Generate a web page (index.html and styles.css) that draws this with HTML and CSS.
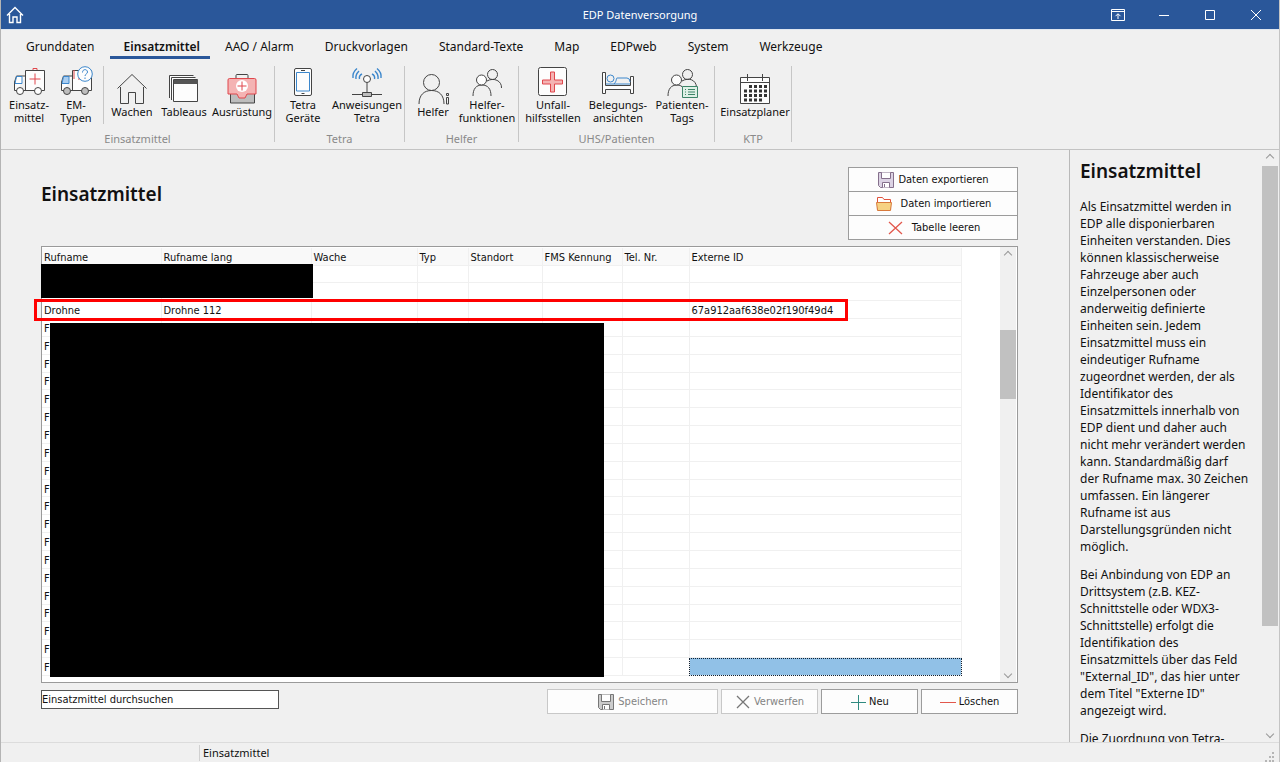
FILE: index.html
```html
<!DOCTYPE html>
<html lang="de">
<head>
<meta charset="utf-8">
<title>EDP Datenversorgung</title>
<link rel="stylesheet" href="styles.css">
</head>
<body>
<div class="app">
  <header class="titlebar">
    <button class="tb-btn tb-home" aria-label="Start"><svg width="18" height="18" viewBox="0 0 18 18"><path d="M1 9.500 9 1.500l8 8M3.500 8v8.500h3.500v-5.500h4v5.500h3.500V8"/></svg></button>
    <span class="tb-title">EDP Datenversorgung</span>
    <div class="tb-controls">
      <button class="tb-btn" aria-label="Menüband"><svg width="14" height="12" viewBox="0 0 14 12"><path d="M.5.5h13v11H.5zM.5 2.500h13M7 10V5M4.500 7.200 7 4.700l2.500 2.500"/></svg></button>
      <button class="tb-btn" aria-label="Minimieren"><svg width="12" height="12" viewBox="0 0 12 12"><path d="M1 6.500h10"/></svg></button>
      <button class="tb-btn" aria-label="Maximieren"><svg width="12" height="12" viewBox="0 0 12 12"><path d="M1.500 1.500h9v9h-9z"/></svg></button>
      <button class="tb-btn" aria-label="Schließen"><svg width="12" height="12" viewBox="0 0 12 12"><path d="m1 1 10 10M11 1 1 11"/></svg></button>
    </div>
  </header>

  <nav class="tabs">
    <button class="tab">Grunddaten</button>
    <button class="tab tab-active">Einsatzmittel</button>
    <button class="tab">AAO / Alarm</button>
    <button class="tab">Druckvorlagen</button>
    <button class="tab">Standard-Texte</button>
    <button class="tab">Map</button>
    <button class="tab">EDPweb</button>
    <button class="tab">System</button>
    <button class="tab">Werkzeuge</button>
  </nav>

  <div class="ribbon">
    <section class="group">
      <div class="items items-einsatz">
        <button class="item"><svg width="34" height="32" viewBox="0 0 34 32"><path class="k w" d="M13.500 24.500V4.500h19v20h-3M23 24.500H11M5 24.500H2.500V16l2-6h9"/><path class="b" d="M4.500 10.500H10v7H3z"/><path class="r" d="M21 4V2.500h4V4M23 7.500v11M17.500 13h11"/><circle class="k w" cx="8" cy="25" r="3.500"/><circle class="k w" cx="26" cy="25" r="3.500"/></svg><span>Einsatz-<br>mittel</span></button>
        <button class="item"><svg width="34" height="32" viewBox="0 0 34 32"><path class="k w" d="M13.500 24.500V4.500h19v20h-3M23 24.500H11M5 24.500H2.500V16l2-6h9"/><path class="b bf" d="M4.500 10.500H10v7H3z"/><path class="r" d="M15 4v9M19 13h2"/><circle class="k g" cx="8" cy="25" r="3.500"/><circle class="k g" cx="26" cy="25" r="3.500"/><circle class="b w" cx="26" cy="8" r="7.300"/><path class="b" d="M23.500 6.500c0-4 5-3.500 5-.500 0 2-2.500 2-2.500 4M26 11.500v1.500"/></svg><span>EM-<br>Typen</span></button>
        <i class="sep"></i>
        <button class="item"><svg width="32" height="32" viewBox="0 0 32 32"><path class="k" d="M1.500 15.500 16 1.500l14.500 14M4.500 14v16.500h8v-11h7v11h8V14"/></svg><span>Wachen</span></button>
        <button class="item"><svg width="32" height="32" viewBox="0 0 32 32"><path class="k w" d="M1.500 25V2.500h24M3.500 27V4.500h24M5.500 28V6.500h24v22h-24z"/><path class="df" d="M6 7h24v4H6z"/></svg><span>Tableaus</span></button>
        <button class="item"><svg width="32" height="32" viewBox="0 0 32 32"><path class="k g" d="M4.500 19v11h24V19z"/><path class="k" d="M10 5V2.500q0-1 1-1h10q1 0 1 1V5"/><path class="r rf" d="M3.500 5.500h25q1.500 0 1.500 1.500v14h-9l-2 4h-6l-2-4H2V7q0-1.500 1.500-1.500z"/><circle cx="16" cy="13" r="6" fill="#fff"/><path class="r" d="M16 8.500v9M11.500 13h9"/></svg><span>Ausrüstung</span></button>
      </div>
      <div class="group-label">Einsatzmittel</div>
    </section>
    <section class="group">
      <div class="items items-tetra">
        <button class="item"><svg width="32" height="32" viewBox="0 0 32 32"><rect class="k w" x="7.500" y="2.500" width="17" height="27" rx="1.500"/><path class="b" d="M9.500 6.500h13v18.500h-13z"/><path class="k" d="M14 4.500h4M14.500 27.500h3"/></svg><span>Tetra<br>Geräte</span></button>
        <button class="item"><svg width="32" height="32" viewBox="0 0 32 32"><circle class="k w" cx="16" cy="13" r="3.500"/><path class="k" d="M16 16.500V27M1 28.500h30"/><path class="k g" d="M11.500 26.500h9v4h-9z"/><path class="b b2" d="M11 8c-2 1-3 3-2.500 5M8 5C6 7 4.500 10 5 13M6 2.500C3 5 1.500 9 2 12M21 8c2 1 3 3 2.500 5M24 5C26 7 27.500 10 27 13M26 2.500c3 2.500 4.500 6.500 4 9.500"/></svg><span>Anweisungen<br>Tetra</span></button>
      </div>
      <div class="group-label">Tetra</div>
    </section>
    <section class="group">
      <div class="items items-helfer">
        <button class="item"><svg width="32" height="32" viewBox="0 0 32 32"><circle class="k" cx="14.500" cy="9.500" r="8"/><path class="k" d="M2 31c0-9 5-13.500 12.500-13.500S27 22 27 31M29.500 20.500h2v2h-2zM29.500 24.500h2v6.500h-2z"/></svg><span>Helfer</span></button>
        <button class="item"><svg width="32" height="32" viewBox="0 0 32 32"><circle class="k" cx="21.500" cy="8.500" r="5"/><path class="k" d="M16 15c7-4 15 0 14.500 7M2 30c0-7 3-11 9-11s9 4 9 11"/><circle class="k w" cx="10.500" cy="14" r="5"/></svg><span>Helfer-<br>funktionen</span></button>
      </div>
      <div class="group-label">Helfer</div>
    </section>
    <section class="group">
      <div class="items items-uhs">
        <button class="item"><svg width="32" height="32" viewBox="0 0 32 32"><rect class="k w" x="1.500" y="1.500" width="28" height="28" rx="2"/><path class="r rf" d="M13.500 6h4v8h8v4h-8v8h-4v-8h-8v-4h8z"/></svg><span>Unfall-<br>hilfsstellen</span></button>
        <button class="item"><svg width="32" height="32" viewBox="0 0 32 32"><path class="k w" d="M.5 6.500h3v13h25v-9h3v17h-3v-4h-25v4h-3z"/><circle class="b" cx="8.500" cy="12.500" r="3.500"/><path class="b" d="M12 18c3-3 2-6 3-6h10q3 0 3 4M4 18h24"/></svg><span>Belegungs-<br>ansichten</span></button>
        <button class="item"><svg width="32" height="32" viewBox="0 0 32 32"><circle class="k" cx="21.500" cy="8.500" r="5"/><path class="k" d="M16 15c7-4 14-1 14.500 6M2 30c0-7 3-11 9-11 3 0 5 1 6 3"/><circle class="k w" cx="10.500" cy="14" r="5"/><path class="gn" d="M16.500 20.500h15v11h-15zM19 23.500h1M22 23.500h7M19 26h1M22 26h7M19 28.500h1M22 28.500h7"/></svg><span>Patienten-<br>Tags</span></button>
      </div>
      <div class="group-label">UHS/Patienten</div>
    </section>
    <section class="group">
      <div class="items items-ktp">
        <button class="item"><svg width="32" height="32" viewBox="0 0 32 32"><path class="k w" d="M1.500 4.500h29v26h-29zM1.500 9.500h29"/><path class="k" d="M8.500 1v7M23.500 1v7"/><path d="M10 13.500h18M5 18h23M5 22.500h23M5 27h18" fill="none" stroke="#333" stroke-width="3" stroke-dasharray="3 2"/></svg><span>Einsatzplaner</span></button>
      </div>
      <div class="group-label">KTP</div>
    </section>
  </div>

  <div class="body">
    <main class="main">
      <div class="main-head">
        <h1 class="title">Einsatzmittel</h1>
        <div class="actions">
          <button class="btn"><svg width="18" height="18" viewBox="0 0 18 18"><path d="M1.500 1.500h15v15h-13l-2-2z" fill="#dcd3e4" stroke="#85708c"/><path d="M4.500 1.500v6h9v-6M5.500 16.500v-5h7v5M7.500 13v3" fill="#fff" stroke="#85708c"/></svg>Daten exportieren</button>
          <button class="btn btn-wide"><svg width="18" height="18" viewBox="0 0 18 18"><path d="M2.500 15V2.500h5l1.500 2h6.500V15" fill="#fff" stroke="#e0533d"/><path d="M1.500 7.500h15l-1 8h-13z" fill="#f6d283" stroke="#d87a3c"/></svg>Daten importieren</button>
          <button class="btn btn-wide"><svg width="18" height="18" viewBox="0 0 18 18"><path d="m3 3 13 12M16 3 3 15" fill="none" stroke="#e2574c" stroke-width="1.300"/></svg>Tabelle leeren</button>
        </div>
      </div>

      <div class="grid-box">
        <div class="grid-scroll">
          <table class="grid">
            <colgroup><col class="c1"><col class="c2"><col class="c3"><col class="c4"><col class="c5"><col class="c6"><col class="c7"><col class="c8"></colgroup>
            <thead><tr><th>Rufname</th><th>Rufname lang</th><th>Wache</th><th>Typ</th><th>Standort</th><th>FMS Kennung</th><th>Tel. Nr.</th><th>Externe ID</th></tr></thead>
            <tbody id="rows"></tbody>
          </table>
        </div>
        <div class="vscroll"><span class="arrow arrow-up"></span><span class="track"><span class="thumb thumb-grid"></span></span><span class="arrow arrow-down"></span></div>
        <div class="mask mask-top"></div>
        <div class="mask mask-rows"></div>
        <div class="marker"></div>
      </div>

      <div class="footer">
        <input class="search" type="text" aria-label="Einsatzmittel durchsuchen" placeholder="Einsatzmittel durchsuchen">
        <div class="footer-buttons">
          <button class="btn btn-save" disabled><svg width="18" height="18" viewBox="0 0 18 18"><path d="M1.500 1.500h15v15h-13l-2-2z" fill="#ccc" stroke="#777"/><path d="M4.500 1.500v7h9v-7M5.500 16.500v-5h7v5M7.500 13v3" fill="#fff" stroke="#777"/></svg>Speichern</button>
          <button class="btn btn-std" disabled><svg width="16" height="18" viewBox="0 0 16 18"><path d="m2 3 12 12M14 3 2 15" fill="none" stroke="#777" stroke-width="1.300"/></svg>Verwerfen</button>
          <button class="btn btn-std"><svg width="16" height="18" viewBox="0 0 16 18"><path d="M1 9.500h15M8.500 2v15" fill="none" stroke="#2f8a80"/></svg>Neu</button>
          <button class="btn btn-std"><svg width="16" height="18" viewBox="0 0 16 18"><path d="M0 9.500h16" fill="none" stroke="#e2574c"/></svg>Löschen</button>
        </div>
      </div>
    </main>

    <aside class="help">
      <div class="help-text">
        <h2 class="title">Einsatzmittel</h2>
        <p>Als Einsatzmittel werden in<br>EDP alle disponierbaren<br>Einheiten verstanden. Dies<br>können klassischerweise<br>Fahrzeuge aber auch<br>Einzelpersonen oder<br>anderweitig definierte<br>Einheiten sein. Jedem<br>Einsatzmittel muss ein<br>eindeutiger Rufname<br>zugeordnet werden, der als<br>Identifikator des<br>Einsatzmittels innerhalb von<br>EDP dient und daher auch<br>nicht mehr verändert werden<br>kann. Standardmäßig darf<br>der Rufname max. 30 Zeichen<br>umfassen. Ein längerer<br>Rufname ist aus<br>Darstellungsgründen nicht<br>möglich.</p>
        <p>Bei Anbindung von EDP an<br>Drittsystem (z.B. KEZ-<br>Schnittstelle oder WDX3-<br>Schnittstelle) erfolgt die<br>Identifikation des<br>Einsatzmittels über das Feld<br>"External_ID", das hier unter<br>dem Titel "Externe ID"<br>angezeigt wird.</p>
        <p>Die Zuordnung von Tetra-</p>
      </div>
      <div class="vscroll"><span class="arrow arrow-up"></span><span class="track"><span class="thumb thumb-help"></span></span><span class="arrow arrow-down"></span></div>
    </aside>
  </div>

  <footer class="status">
    <span class="status-left"></span>
    <span class="status-text">Einsatzmittel</span>
    <svg class="grip" width="10" height="10" viewBox="0 0 10 10"><path d="M7 0h2v2H7zM4 4h2v2H4zM7 4h2v2H7zM0 8h2v2H0zM4 8h2v2H4zM7 8h2v2H7z" fill="#b5b5b5"/></svg>
  </footer>
</div>
<script src="rows.js"></script>
</body>
</html>
```
FILE: styles.css
```css
* { box-sizing: border-box; }
body { margin: 0; font-family: "Noto Sans", "Open Sans", sans-serif; font-size: 11px; color: #111; }
button { font: inherit; color: inherit; background: none; border: 0; padding: 0; margin: 0; }
.app { height: 100vh; display: flex; flex-direction: column; background: #f0f0f0; border-left: 1px solid #b4b4b4; border-right: 1px solid #c4c4c4; overflow: hidden; }

.titlebar { flex: none; height: 30px; background: #2a579a; color: #fff; display: grid; grid-template-columns: 1fr auto 1fr; align-items: center; border-bottom: 1px solid #dfe6f0; }
.tb-title { font-size: 11px; line-height: 16px; }
.tb-btn { display: flex; align-items: center; justify-content: center; width: 46px; height: 28px; }
.tb-btn svg { fill: none; stroke: #fff; }
.tb-home { width: 28px; }
.tb-home svg { stroke-width: 1.4; }
.tb-controls { display: flex; justify-content: flex-end; }

.tabs { flex: none; display: flex; gap: 1px; height: 32px; padding-left: 10px; }
.tab { font-size: 12px; line-height: 16px; padding: 9px 15px 0; display: flex; flex-direction: column; align-items: center; white-space: nowrap; }
.tab-active { font-weight: 600; position: relative; padding-right: 9px; padding-left: 13px; }
.tab-active::after { content: ""; position: absolute; left: -1px; right: -1px; top: 26px; height: 3px; background: #2a579a; }

.ribbon { flex: none; display: flex; height: 88px; padding-top: 4px; border-bottom: 1px solid #c3c3c3; }
.group { height: 76px; border-right: 1px solid #c6c6c6; }
.items { display: grid; height: 58px; margin-bottom: 6px; }
.items-einsatz { grid-template-columns: 52px 42px 12px 46px 58px 58px; padding: 0 3px 0 2px; }
.items-tetra { grid-template-columns: 56px 72px; padding-right: 1px; }
.items-helfer { grid-template-columns: 50px 58px; padding: 0 2px 0 3px; }
.items-uhs { grid-template-columns: 64px 66px 62px; padding: 0 1px 0 2px; }
.items-ktp { grid-template-columns: 70px; padding: 0 1px 0 5px; }
.item { display: flex; flex-direction: column; align-items: center; justify-content: center; line-height: 13px; white-space: nowrap; text-align: center; min-width: 0; }
.item svg { flex: none; fill: none; }
.sep { width: 1px; justify-self: center; background: #c6c6c6; }
.group-label { text-align: center; color: #8a8a8a; line-height: 18px; }
.k { stroke: #444; fill: none; }
.b { stroke: #3c87cc; fill: none; }
.b2 { stroke-width: 1.4; }
.r { stroke: #e0474c; fill: none; }
.gn { stroke: #3d8468; fill: #dff0e6; }
.w { fill: #fdfdfd; }
.g { fill: #bdbdbd; }
.bf { fill: #a9cdf0; }
.rf { fill: #f4b3b3; }
.df { fill: #555; }

.body { flex: 1; min-height: 0; display: flex; }
.main { flex: 1; min-width: 0; display: flex; flex-direction: column; padding: 17px 51px 28px 40px; }
.main-head { display: flex; justify-content: space-between; align-items: flex-start; }
.title { margin: 0; font-size: 19px; line-height: 26px; font-weight: 600; }
.main-head .title { padding-top: 14px; }
.actions { width: 170px; display: flex; flex-direction: column; }
.actions .btn + .btn { margin-top: -1px; }
.btn { display: flex; align-items: center; justify-content: center; gap: 3px; height: 25px; background: #fdfdfd; border: 1px solid #9c9c9c; font-family: "DejaVu Sans Condensed", "Noto Sans", sans-serif; font-size: 11px; white-space: nowrap; }
.btn:disabled { color: #838383; border-color: #c8c8c8; }
.btn-wide { gap: 8px; }

.grid-box { flex: 1; min-height: 0; margin-top: 6px; border: 1px solid #9a9a9a; background: #fff; display: flex; position: relative; }
.grid-scroll { flex: 1; padding: 1px 0 6px; }
.grid { height: 100%; table-layout: fixed; width: 920px; border-collapse: collapse; font-family: "DejaVu Sans Condensed", "Noto Sans", sans-serif; font-size: 11px; line-height: 13px; }
.grid th, .grid td { height: 17px; padding: 2px 0 0 2px; text-align: left; font-weight: 400; border-right: 1px solid #f0f0f0; border-bottom: 1px solid #f0f0f0; white-space: nowrap; overflow: hidden; }
.grid th { background: #f9f9f9; }
.c1 { width: 119px; }
.c2 { width: 150px; }
.c3 { width: 106px; }
.c4 { width: 51px; }
.c5 { width: 74px; }
.c6 { width: 80px; }
.c7 { width: 67px; }
.grid .selected { background: #91c1e7; outline: 1px dotted #123; outline-offset: -1px; }
.mask { position: absolute; background: #000; }
.mask-top { left: -1px; top: 17px; width: 272px; height: 34px; }
.mask-rows { left: 8px; top: 76px; width: 554px; bottom: 5px; }
.marker { position: absolute; left: -8px; top: 52px; width: 814px; height: 22px; border: 3px solid #f00; }

.vscroll { flex: none; width: 16px; display: flex; flex-direction: column; background: #f0f0f0; margin-right: 1px; }
.arrow { height: 16px; display: flex; align-items: center; justify-content: center; }
.arrow::before { content: ""; width: 5px; height: 5px; border: solid #999; border-width: 1px 0 0 1px; transform: rotate(45deg); }
.arrow-down::before { transform: rotate(225deg); }
.track { flex: 1; display: flex; flex-direction: column; }
.thumb { background: #c1c1c1; }
.thumb-grid { margin-top: 67px; height: 69px; }
.thumb-help { height: 460px; }

.footer { display: flex; justify-content: space-between; margin-top: 6px; }
.search { width: 238px; height: 19px; margin-top: 1px; border: 1px solid #555; background: #fff; font-family: "DejaVu Sans Condensed", "Noto Sans", sans-serif; font-size: 11px; padding: 0; }
.search::placeholder { color: #111; opacity: 1; }
.footer-buttons { display: flex; gap: 3px; }
.btn-save { width: 171px; }
.btn-std { width: 97px; }

.help { flex: none; width: 210px; display: flex; border-left: 1px solid #b9b9b9; }
.help-text { flex: 1; min-width: 0; padding: 8px 0 0 10px; overflow: hidden; font-size: 12px; line-height: 17px; white-space: nowrap; }
.help-text p { margin: 14px 0 0; }
.help-text p + p { margin-top: 11px; }

.status { flex: none; height: 20px; display: flex; align-items: center; border-top: 1px solid #dcdcdc; }
.status-left { width: 199px; height: 16px; border-right: 1px solid #d0d0d0; }
.status-text { flex: 1; padding-left: 3px; }
.grip { margin: 8px 4px 0 0; }
```
FILE: rows.js
```javascript
const body = document.getElementById("rows");
const COLUMNS = 8;
const ROWS = 23;
for (let r = 0; r < ROWS; r++) {
  const tr = document.createElement("tr");
  for (let c = 0; c < COLUMNS; c++) {
    const td = document.createElement("td");
    if (r === 2) td.textContent = { 0: "Drohne", 1: "Drohne 112", 7: "67a912aaf638e02f190f49d4" }[c] || "";
    if (r > 2 && c === 0) td.textContent = "F";
    if (r === ROWS - 1 && c === COLUMNS - 1) td.className = "selected";
    tr.append(td);
  }
  body.append(tr);
}
```
